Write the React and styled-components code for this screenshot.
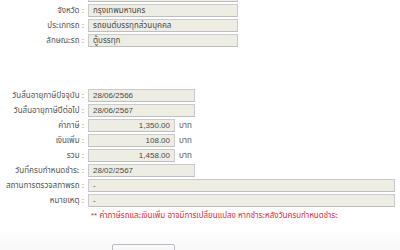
import React from 'react';
import styled, { createGlobalStyle } from 'styled-components';

const GlobalStyle = createGlobalStyle`
    html, body {
        margin: 0;
        padding: 0;
        background: #fff;
        overflow: hidden;
    }
    body {
        font-family: "Liberation Sans", "Noto Sans Thai", "Loma", "Garuda", "Norasi", sans-serif;
        font-size: 8px;
        color: #444;
    }
`;

const Page = styled.div`
    width: 400px;
    height: 250px;
    overflow: hidden;
`;

const Section = styled.div`
    margin-top: ${props => props.top}px;
`;

const Row = styled.div`
    display: grid;
    grid-template-columns: 84px auto;
    column-gap: 4px;
    align-items: center;
    height: 13px;
    margin-bottom: 2px;
`;

const Label = styled.div`
    text-align: right;
    white-space: nowrap;
    color: #555;
    font-size: 8px;
`;

const FieldLine = styled.div`
    display: flex;
    align-items: center;
`;

const Field = styled.div`
    box-sizing: border-box;
    width: ${props => props.width}px;
    height: 13px;
    line-height: 11px;
    padding: 0 4px;
    border: 1px solid #c9c9cf;
    border-bottom-color: #bdbdc4;
    background: #eeede3;
    color: #4a4a4a;
    font-size: 8px;
    white-space: nowrap;
    overflow: hidden;
    text-align: ${props => props.align || 'left'};
`;

const Unit = styled.span`
    margin-left: 4px;
    color: #555;
    font-size: 8px;
`;

const Note = styled.div`
    padding-left: 91px;
    margin-top: 3px;
    height: 12px;
    line-height: 12px;
    color: #cc3340;
    font-size: 8px;
    white-space: nowrap;
`;

const Footer = styled.div`
    margin-top: 10px;
    height: 40px;
    padding-top: 12px;
    box-sizing: border-box;
    background: linear-gradient(#fdfdfd, #f4f4f4);
`;

const Button = styled.button`
    display: block;
    margin-left: 112px;
    width: 63px;
    height: 22px;
    border: 1px solid #b9b9c2;
    border-radius: 2px;
    background: linear-gradient(#fafafa, #ececec);
    padding: 0;
`;

const topRows = [
    { label: '', value: '' },
    { label: 'จังหวัด :', value: 'กรุงเทพมหานคร' },
    { label: 'ประเภทรถ :', value: 'รถยนต์บรรทุกส่วนบุคคล' },
    { label: 'ลักษณะรถ :', value: 'ตู้บรรทุก' },
];

const taxRows = [
    { label: 'วันสิ้นอายุภาษีปัจจุบัน :', value: '28/06/2566', width: 107 },
    { label: 'วันสิ้นอายุภาษีปีต่อไป :', value: '28/06/2567', width: 107 },
    { label: 'ค่าภาษี :', value: '1,350.00', width: 87, unit: 'บาท' },
    { label: 'เงินเพิ่ม :', value: '108.00', width: 87, unit: 'บาท' },
    { label: 'รวม :', value: '1,458.00', width: 87, unit: 'บาท' },
    { label: 'วันที่ครบกำหนดชำระ :', value: '28/02/2567', width: 107 },
    { label: 'สถานการตรวจสภาพรถ :', value: '-', width: 307 },
    { label: 'หมายเหตุ :', value: '-', width: 307 },
];

function App() {
    return (
        <Page>
            <GlobalStyle />
            <Section top={-11}>
                {topRows.map((row, i) => (
                    <Row key={i}>
                        <Label>{row.label}</Label>
                        <Field width={150}>{row.value}</Field>
                    </Row>
                ))}
            </Section>
            <Section top={42}>
                {taxRows.map((row, i) => (
                    <Row key={i}>
                        <Label>{row.label}</Label>
                        <FieldLine>
                            <Field width={row.width} align={row.unit ? 'right' : 'left'}>{row.value}</Field>
                            {row.unit && <Unit>{row.unit}</Unit>}
                        </FieldLine>
                    </Row>
                ))}
            </Section>
            <Note>** ค่าภาษีรถและเงินเพิ่ม อาจมีการเปลี่ยนแปลง หากชำระหลังวันครบกำหนดชำระ</Note>
            <Footer>
                <Button type="button" />
            </Footer>
        </Page>
    );
}

export default App;
